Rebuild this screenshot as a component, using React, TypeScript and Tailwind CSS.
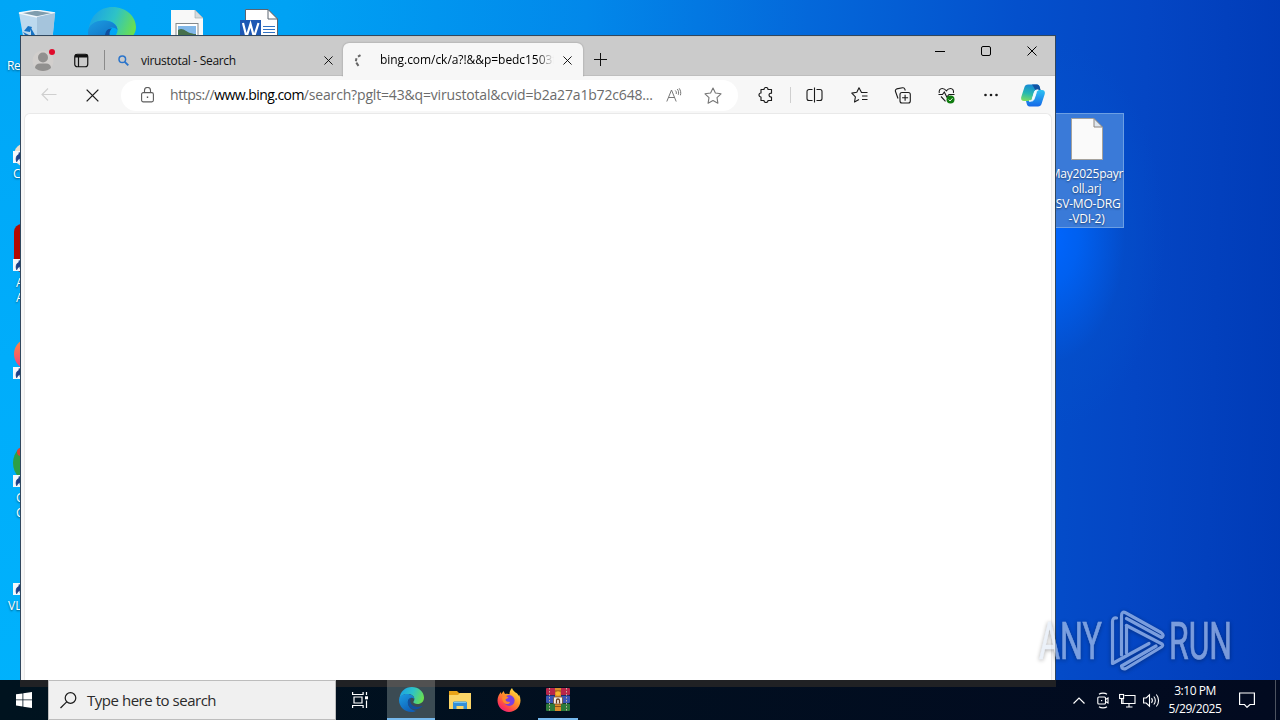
import React from 'react';

const UI_FONT = "font-['Open_Sans','Noto_Sans',sans-serif]";

const ShortcutArrow: React.FC = () => (
  <svg className="block" width="12" height="12" viewBox="0 0 12 12">
    <rect width="12" height="12" fill="#f4f7fb" />
    <path d="M3.500 10.500C2.500 7 3.500 4 6 3.500V1.500L11 6l-4 3.600V7.400C5.600 7.500 4.600 8.600 4 10.500z" fill="#1d3f86" stroke="#1d3f86" strokeWidth=".8" />
  </svg>
);

const EdgeIcon: React.FC<{ size: number; id: string }> = ({ size, id }) => (
  <svg className="block shrink-0" width={size} height={size} viewBox="0 0 48 48">
    <defs>
      <linearGradient id={`${id}-top`} x1="0" y1="0.3" x2="1" y2="0.6">
        <stop offset="0" stopColor="#1aa2e6" />
        <stop offset="0.5" stopColor="#2ec3c6" />
        <stop offset="1" stopColor="#6be04c" />
      </linearGradient>
      <linearGradient id={`${id}-body`} x1="0" y1="0" x2="0.6" y2="1">
        <stop offset="0" stopColor="#1b9de2" />
        <stop offset="1" stopColor="#0f5fb8" />
      </linearGradient>
    </defs>
    <path d="M1 22C2 9 12 0 24.500 0 38 0 48 9.500 48 20c0 8-5.500 12.500-12.500 12.500-5 0-8-2-8-3.600 0-1 2-2.200 2-5.900C29.500 17.500 24 13.500 16.500 13.500 8.500 13.500 3 17.500 1 22z" fill={`url(#${id}-top)`} />
    <path d="M0 25c0-7 7-11.500 15.500-11.500 8 0 14 4.200 14 9.500C27 20.500 24 20 22 21c-4 2-6 6-4.500 12 2 8 9 12.500 16 12.500-3 1.600-6 2.500-9.500 2.500C10.500 48 0 37.500 0 25z" fill={`url(#${id}-body)`} />
    <path d="M17 28c-1 9 7 15.500 15 15 5-.3 9-2.400 12.500-5.500.6-.5 0-1.200-.8-.8-2 1-4.500 1.600-7.700 1.600-9 0-14.500-6-14.500-11.300 0-2.500 1-4.500 2.500-5.800C20 21.500 17.500 23.500 17 28z" fill="#124f9e" />
  </svg>
);

const RecycleBin: React.FC = () => (
  <svg className="block" width="40" height="48" viewBox="0 0 40 48">
    <path d="M1 3l17-3 19 3-4 40H8z" fill="#bcd9ee" />
    <path d="M1 3l17-3 19 3-18 4z" fill="#7f9dae" stroke="#f1f7fb" strokeWidth="1.300" />
    <path d="M19 7l18-4-4 40-14-3z" fill="#a5c4dc" />
    <path d="M6 21l4-5 4 1-2 5zM13 18l4 7-4 2zM5 22l6 3v6z" fill="#1673c5" />
  </svg>
);

const PictureFile: React.FC = () => (
  <svg className="block" width="32" height="40" viewBox="0 0 32 40">
    <path d="M0 0h24l8 8v32H0z" fill="#f8f8f8" />
    <path d="M24 0v8h8z" fill="#d5dadd" stroke="#9aa" strokeWidth=".6" />
    <rect x="5" y="13.500" width="22" height="18" fill="#fff" stroke="#84898c" />
    <rect x="7" y="16" width="18" height="14" fill="#81b7e8" />
    <path d="M7 20c5-3 8 2 12 3s4 1 6 1v6H7z" fill="#46704c" />
  </svg>
);

const WordFile: React.FC = () => (
  <svg className="block" width="38" height="40" viewBox="0 0 38 40">
    <path d="M5.500 .5H28L37.500 10v30h-32z" fill="#fff" stroke="#5b6470" />
    <path d="M28 .5V10h9.500z" fill="#fff" stroke="#5b6470" />
    <path d="M23 17.500h12M23 20.500h12M23 23.500h12" stroke="#2f72c4" />
    <rect x="0" y="11" width="21" height="20" fill="#1d58b4" />
    <path d="M3 14l3.500 14L10.500 15l3.500 13 4.500-14" fill="none" stroke="#fff" strokeWidth="2.200" />
  </svg>
);

const BlankFile: React.FC = () => (
  <svg className="block" width="32" height="42" viewBox="0 0 32 42">
    <path d="M.5.500h22l9 9v32H.5z" fill="#fafafa" stroke="#a5a29c" />
    <path d="M23 .5v8.500h8.500z" fill="#dfe6ee" stroke="#8c8680" />
  </svg>
);

const Close: React.FC<{ size: number; className?: string }> = ({ size, className = '' }) => (
  <svg className={`block shrink-0 ${className}`} width={size} height={size} viewBox="0 0 10 10">
    <path d="M.5.500l9 9M9.500.500l-9 9" stroke="currentColor" strokeWidth="1" />
  </svg>
);

const TabStrip: React.FC = () => (
  <div className="flex h-10 shrink-0 bg-[#cbcbcb] border-b border-[#bebebe] border-t border-t-[#c6c6c2]">
    <div className="flex w-[322px] items-center pt-2">
      <svg className="ml-[11px] block shrink-0" width="24" height="24" viewBox="0 0 24 24">
        <circle cx="11" cy="13" r="10.500" fill="#d2cfcd" />
        <circle cx="11" cy="9.500" r="5" fill="#91908f" />
        <path d="M3 20c0-3 2-4.500 5-4.500h6c3 0 5 1.500 5 4.500-4 4-12 4-16 0z" fill="#91908f" />
        <circle cx="20" cy="4" r="3" fill="#e00b2b" />
      </svg>
      <svg className="ml-[18px] block shrink-0" width="15" height="15" viewBox="0 0 15 15" fill="none" stroke="#111">
        <rect x=".75" y="1.250" width="13" height="12.500" rx="2.500" strokeWidth="1.200" />
        <path d="M1 3h12.500" strokeWidth="3" />
        <path d="M4.500 4v10" strokeWidth="1.200" />
      </svg>
      <div className="ml-[15px] h-5 w-px shrink-0 bg-[#8a8a8a]" />
      <svg className="ml-[13px] block shrink-0" width="11" height="11" viewBox="0 0 11 11" fill="none" stroke="#2a74cb">
        <circle cx="4.300" cy="4.300" r="3.300" strokeWidth="1.500" />
        <path d="M6.800 6.800L10.300 10.300" strokeWidth="1.900" />
      </svg>
      <span className="ml-3 pt-px text-[12px] leading-4 text-[#111] tracking-[-0.3px] whitespace-nowrap">virustotal - Search</span>
      <Close size={9} className="ml-auto mr-[10px] text-black" />
    </div>
    <div className="mt-[6px] flex h-[34px] w-[240px] shrink-0 items-center rounded-t-md bg-[#f7f7f7] shadow-[0_0_2px_rgba(0,0,0,0.300)] [clip-path:inset(-3px_-3px_0_-3px)]">
      <svg className="ml-[11px] block shrink-0" width="8" height="13" viewBox="0 0 8 13" fill="none" stroke="#666" strokeWidth="2">
        <path d="M6.500 1.200L4 2.700M2.500 4.300L1.800 7.300M2.300 8.700L4.500 11.800" />
      </svg>
      <span className="ml-[18px] w-[174px] overflow-hidden whitespace-nowrap bg-linear-to-r from-black from-90% to-transparent bg-clip-text text-[12px] leading-4 tracking-[-0.05px] text-transparent">
        bing.com/ck/a?!&amp;&amp;p=bedc1503f
      </span>
      <Close size={9} className="ml-[9px] text-black" />
    </div>
    <svg className="ml-[10px] mt-[15px] block" width="15" height="15" viewBox="0 0 15 15">
      <path d="M7.500 1v13M1 7.500h13" stroke="#111" strokeWidth="1" />
    </svg>
    <div className="ml-auto flex h-[28px] text-black">
      <div className="flex w-[46px] items-center justify-center">
        <div className="h-px w-[10px] bg-black" />
      </div>
      <div className="flex w-[46px] items-center justify-center">
        <div className="h-[10px] w-[10px] rounded-[2px] border border-black" />
      </div>
      <div className="flex w-[46px] items-center justify-center">
        <Close size={10} />
      </div>
    </div>
  </div>
);

const Toolbar: React.FC = () => (
  <div className="flex h-[37px] shrink-0 items-center bg-[#f7f7f7] pt-px text-[#1b1b1b]">
    <svg className="ml-5 block shrink-0" width="16" height="14" viewBox="0 0 16 14" fill="none" stroke="#cfcfcf" strokeWidth="1.100">
      <path d="M15.500 6.500H1M7 .5l-6 6 6 6" />
    </svg>
    <Close size={13} className="ml-[29px]" />
    <div className="ml-[22px] flex h-[31px] w-[617px] shrink-0 items-center rounded-full bg-white">
      <svg className="ml-[20px] block shrink-0" width="13" height="16" viewBox="0 0 13 16" fill="none" stroke="#5d5d5d" strokeWidth="1.100">
        <rect x=".6" y="5.600" width="11.800" height="9.300" rx="1.600" />
        <path d="M3.500 5.500V3.500a3 3 0 016 0v2" />
        <rect x="5.800" y="9.500" width="1.400" height="1.400" fill="#444" stroke="none" />
      </svg>
      <span className="ml-[16px] w-[484px] shrink-0 whitespace-nowrap text-[14px] leading-5 tracking-[-0.17px] text-[#6b6b6b]">
        <span className="tracking-[-0.45px]">https://</span><span className="text-black tracking-[-0.55px]">www.bing.com</span>/search?pglt=43&amp;q=virustotal&amp;cvid=b2a27a1b72c648...
      </span>
      <svg className="ml-[12px] block shrink-0" width="16" height="15" viewBox="0 0 16 15" fill="none" stroke="#777" strokeWidth="1">
        <path d="M.8 13.500L5.500 2l4.700 11.500M2.500 9.500h6M9.300 2.500c1 .8 1.300 2 .9 3.500M11.300 1c1.300 1.800 1.600 3.500 1 5.800M13.200.300c1.500 2.200 1.900 4.500 1.200 7" />
      </svg>
      <svg className="ml-[22px] block shrink-0" width="18" height="17" viewBox="0 0 18 17" fill="none" stroke="#777" strokeWidth="1.100" strokeLinejoin="round">
        <path d="M9 1l2.400 5 5.600.8-4 3.900.9 5.500L9 13.600l-4.900 2.600.9-5.500-4-3.900L6.600 6z" />
      </svg>
    </div>
    <svg className="ml-[20px] block shrink-0" width="16" height="16" viewBox="0 0 16 16" fill="none" stroke="currentColor" strokeWidth="1.150">
      <path d="M3 2.500h3a2 2 0 014 0h3.500v3.700c-3.300-.4-3.300 4.200 0 3.800v3.500H10a2 2 0 01-4 0H3V10a2 2 0 010-4z" strokeLinejoin="round" />
    </svg>
    <div className="ml-[16px] h-4 w-px shrink-0 bg-[#cfcfcf]" />
    <svg className="ml-[15px] block shrink-0" width="17" height="16" viewBox="0 0 17 16" fill="none" stroke="currentColor" strokeWidth="1.100">
      <path d="M6.500 2.500H3a2 2 0 00-2 2v7a2 2 0 002 2h3.500M10.500 2.500H14a2 2 0 012 2v7a2 2 0 01-2 2h-3.500M8.500.500v15" />
    </svg>
    <svg className="ml-[28px] block shrink-0" width="17" height="16" viewBox="0 0 17 16" fill="none" stroke="currentColor" strokeWidth="1.100">
      <path d="M11.300 5.500h-.8L8 .8 5.800 5.300.8 6.100 4.400 9.800l-.9 5.200L8 12.600M10 5.500h6.500M11 9h5.500M11 12.500h5.500" strokeLinejoin="round" />
    </svg>
    <svg className="ml-[26px] block shrink-0" width="17" height="17" viewBox="0 0 17 17" fill="none" stroke="currentColor" strokeWidth="1.100">
      <rect x="6" y="5.500" width="10.300" height="10.500" rx="2" />
      <path d="M11.100 7.800v6M8.100 10.800h6M4 11.500L1.500 4.500a2 2 0 011.200-2.600L8.500.8a2 2 0 012.300 1.300l.5 1.400" />
    </svg>
    <svg className="ml-[27px] block shrink-0" width="17" height="17" viewBox="0 0 17 17" fill="none" stroke="currentColor" strokeWidth="1.100">
      <path d="M1.300 6C.7 3.500 2 1.500 4.200 1.500c2 0 3.200 1 4.100 2.300 1-1.300 2.200-2.300 4.200-2.300 2.200 0 3.500 2 2.900 4.500M3 9.500l4.500 4.800M.5 7.500h4L6.300 5l2.500 5L11 7.500h5.500" />
      <circle cx="12.500" cy="12.500" r="4" fill="#107c10" stroke="none" />
      <path d="M10.700 12.600l1.400 1.400 2.400-2.800" stroke="#fff" strokeWidth=".9" />
    </svg>
    <svg className="ml-[29px] block shrink-0" width="14" height="4" viewBox="0 0 14 4" fill="#1b1b1b">
      <circle cx="1.500" cy="2" r="1.300" />
      <circle cx="7" cy="2" r="1.300" />
      <circle cx="12.500" cy="2" r="1.300" />
    </svg>
    <svg className="ml-[23px] block shrink-0" width="24" height="23" viewBox="0 0 24 23">
      <defs>
        <linearGradient id="cp-left" x1="0.500" y1="0" x2="0.300" y2="1">
          <stop offset="0" stopColor="#1587d8" />
          <stop offset="0.550" stopColor="#26b8b0" />
          <stop offset="1" stopColor="#7bdc63" />
        </linearGradient>
        <linearGradient id="cp-right" x1="0.400" y1="0" x2="0.400" y2="1">
          <stop offset="0" stopColor="#2cc2f2" />
          <stop offset="1" stopColor="#1668e8" />
        </linearGradient>
      </defs>
      <path d="M7 .5h9c1.500 0 2.300 1 2.700 2.500L19.500 6h-3c-2 0-3 1-3.600 3l-2 6.500C10.300 17 9 17 7.500 17H3c-2.500 0-3.400-2-2.600-4.500L3.500 3C4 1.500 5 .5 7 .5z" fill="url(#cp-left)" />
      <path d="M11 .5h5c1.500 0 2.300 1 2.700 2.500L19.500 6h-3c-2 0-3-.5-3.500-2.500z" fill="#1253a4" />
      <path d="M17 22.500H8.500c-1.500 0-2.300-1-2.700-2.500L5 17h3c2 0 3-1 3.600-3l2-6.500C14.200 6 15.500 6 17 6h4c2.500 0 3.400 2 2.600 4.500L20.500 20c-.5 1.500-1.500 2.500-3.500 2.500z" fill="url(#cp-right)" />
      <path d="M13.600 7.500L11 16c-.5 1-1.500 1-3 1h2.500c1.500 0 2.300-1 2.800-2.500l2-6c.4-1.500 1-2.500 2-2.500-1.700 0-3 0-3.700 1.500z" fill="#f2fbff" stroke="#f2fbff" />
    </svg>
  </div>
);

const BrowserWindow: React.FC = () => (
  <div className="absolute left-5 top-[35px] flex h-[653px] w-[1036px] flex-col border border-[#31475e] bg-[#f7f7f7]">
    <TabStrip />
    <Toolbar />
    <div className="mx-[3px] flex-1 rounded-t-md border border-b-0 border-[#e9e9e9] bg-white" />
  </div>
);

// Icons whose right part is hidden behind the browser window
const DesktopIcons: React.FC = () => (
  <div className="text-[12px] leading-[15px] text-white [text-shadow:0_1px_2px_rgba(0,0,0,0.500)]">
    <div className="absolute left-[18px] top-[10px]"><RecycleBin /></div>
    <span className="absolute left-[7px] top-[58px] whitespace-nowrap tracking-[-0.3px]">Recycle Bin</span>
    <div className="absolute left-[88px] top-[7px]"><EdgeIcon size={48} id="desk-edge" /></div>
    <div className="absolute left-[171px] top-[10px]"><PictureFile /></div>
    <div className="absolute left-[240px] top-[9px]"><WordFile /></div>

    <div className="absolute left-[14px] top-[143px] h-6 w-8 rounded-full bg-[#eadfce]" />
    <div className="absolute left-[13px] top-[151px]"><ShortcutArrow /></div>
    <span className="absolute left-[13px] top-[166px]">C</span>

    <div className="absolute left-[14px] top-[224px] h-12 w-12 rounded-lg bg-[#b30b00]" />
    <div className="absolute left-[13px] top-[259px]"><ShortcutArrow /></div>
    <div className="absolute left-[16px] top-[275px]">A<br />A</div>

    <div className="absolute left-[14px] top-[338px] h-8 w-8 rounded-full bg-linear-to-b from-[#ff8a2b] to-[#f2317c]" />
    <div className="absolute left-[13px] top-[367px]"><ShortcutArrow /></div>

    <div className="absolute left-[13px] top-[443px] h-10 w-10 rounded-full bg-[#2d9f47]" />
    <div className="absolute left-[17px] top-[448px] h-2 w-4 rounded-full bg-[#dc4437]" />
    <div className="absolute left-[13px] top-[475px]"><ShortcutArrow /></div>
    <div className="absolute left-[16px] top-[490px]">G<br />C</div>

    <div className="absolute left-[13px] top-[583px]"><ShortcutArrow /></div>
    <span className="absolute left-[8px] top-[598px]">VLC</span>

    <div className="absolute left-[1049px] top-[113px] flex h-[115px] w-[75px] flex-col items-center border border-[#6c9fe3] bg-[#3a7ad8] pt-1">
      <BlankFile />
      <div className="mt-[6px] text-center whitespace-nowrap tracking-[-0.2px]">
        May2025payr<br />oll.arj<br />(SV-MO-DRG<br />-VDI-2)
      </div>
    </div>
  </div>
);

const Watermark: React.FC = () => (
  <svg className="absolute left-[1034px] top-[604px] overflow-visible opacity-55 drop-shadow-[0_1px_2px_rgba(0,0,0,0.600)]" width="204" height="74" viewBox="0 0 204 74">
    <g fill="#dce6f5" stroke="#dce6f5" strokeWidth=".7" fontFamily="Roboto, sans-serif" fontSize="52">
      <text x="5" y="55" textLength="63" lengthAdjust="spacingAndGlyphs">ANY</text>
      <text x="135" y="55" textLength="63" lengthAdjust="spacingAndGlyphs">RUN</text>
    </g>
    <g fill="none" stroke="#dce6f5" strokeWidth="3.200" strokeLinejoin="round" strokeLinecap="round">
      <path d="M82.500 14Q78.500 13.500 78.500 17.500V59.500L115 39.500" />
      <path d="M87.500 51V12Q87.500 6.500 92 9L127 28.500Q131 31.500 127.500 33.500L92.500 14.500M92.500 21.500L128 40Q129.500 41.500 127.500 43L92 64.500Q88 66 87.500 62L122 42" />
      <path d="M92.500 21.500V49" />
    </g>
  </svg>
);

const Taskbar: React.FC = () => (
  <div className="absolute bottom-0 left-0 flex h-10 w-full bg-linear-to-r from-[#00131f] to-[#020a20] text-white">
    <div className="absolute left-5 top-0 h-[7px] w-[1036px] bg-[#202124]" />
    <div className="relative flex w-12 shrink-0 items-center justify-center">
      <svg className="block" width="16" height="16" viewBox="0 0 16 16" fill="#fff">
        <path d="M0 2.300l6.500-.9v6.100H0zM7.300 1.300L16 0v7.500H7.300zM0 8.300h6.500v6.200L0 13.600zM7.300 8.300H16V16l-8.700-1.300z" />
      </svg>
    </div>
    <div className="relative flex w-72 shrink-0 items-center border border-[#bdbdbd] bg-[#f0f0f0]">
      <svg className="ml-[11px] block shrink-0" width="17" height="17" viewBox="0 0 17 17" fill="none" stroke="#1b1b1b" strokeWidth="1.200">
        <circle cx="10.500" cy="6" r="5.300" />
        <path d="M6.700 9.800L.5 16" />
      </svg>
      <span className="ml-[10px] text-[15px] leading-5 tracking-[-0.47px] text-[#2b2b2b]">Type here to search</span>
    </div>
    <div className="relative flex w-[51px] shrink-0 items-center pl-4">
      <svg className="block" width="17" height="16" viewBox="0 0 17 16" fill="none" stroke="#fff" strokeWidth="1.200">
        <path d="M.6 0v2.500h10.500V0M.6 16v-2.500h10.500V16M2 5h8v6H2zM14.500 0v3M14.500 8.500V16" />
        <rect x="13" y="4.300" width="3" height="3" fill="#fff" stroke="none" />
      </svg>
    </div>
    <div className="relative flex w-12 shrink-0 items-center justify-center border-b-2 border-[#76b9ed] bg-[#3b4b53]">
      <div className="absolute left-0 top-0 h-[7px] w-full bg-[#515151]" />
      <EdgeIcon size={25} id="bar-edge" />
    </div>
    <div className="relative flex w-[49px] shrink-0 items-center justify-center">
      <svg className="block" width="22" height="20" viewBox="0 0 22 20">
        <path d="M0 1h8l2 2h12v16H0z" fill="#e8a317" />
        <path d="M0 5h9l2-2h11v16H0z" fill="#fbd567" />
        <path d="M4 19v-6c0-1 .7-1.500 1.500-1.500h11c.8 0 1.500.5 1.500 1.500v6h-3.500v-3h-7v3z" fill="#338fd8" />
        <path d="M5 12.500h12" stroke="#74c4f5" />
      </svg>
    </div>
    <div className="relative flex w-[49px] shrink-0 items-center justify-center">
      <svg className="block" width="24" height="24" viewBox="0 0 24 24">
        <defs>
          <linearGradient id="fox" x1="0.900" y1="0" x2="0.200" y2="1">
            <stop offset="0" stopColor="#fff04a" />
            <stop offset="0.450" stopColor="#ff9427" />
            <stop offset="0.800" stopColor="#ff3d4f" />
            <stop offset="1" stopColor="#e51a86" />
          </linearGradient>
        </defs>
        <path d="M15 0c.5 2 2 3 3.500 4.500C20 5 21 6 21.500 8l.5-1.500c1 2 1.500 4 1.500 6C23.500 19 18.300 24 12 24S.5 19 .5 12.500C.5 9 2 6 4 4l.3 2.300L6.500 3 8 6c1.500-.5 3-.5 4.500.2C12.500 3.500 13.500 1.500 15 0z" fill="url(#fox)" />
        <circle cx="12.200" cy="12.500" r="5.400" fill="#7a3fe0" />
        <path d="M5.500 8.500c2.500-1.200 4.500-.5 6 1.200l-2.800 1.500c-.4 1.500.8 2.500 2.300 2.500 1.500 0 2 .3 2 .8-1.200 2.500-5.500 2-7-1-.8-1.500-1-3.500-.5-5z" fill="#ff8a2a" />
      </svg>
    </div>
    <div className="relative flex w-[49px] shrink-0 justify-center pt-2">
      <svg className="block" width="24" height="23" viewBox="0 0 24 23">
        <rect y="0" width="24" height="7" rx="1" fill="#b8264a" />
        <rect y="7.500" width="24" height="7.500" rx="1" fill="#3a55b5" />
        <rect y="15.500" width="24" height="7.500" rx="1" fill="#2c7a3b" />
        <path d="M3.500 0v23M20.500 0v23" stroke="#c8b4a0" strokeDasharray="1.500 1.500" />
        <rect x="9" y="0" width="6" height="23" fill="#d98c2b" />
        <path d="M9 3h6M9 18.500h6" stroke="#8d4f16" />
        <rect x="7.500" y="9" width="9" height="7" rx="1" fill="#f5efe6" stroke="#6d3c1b" strokeWidth=".7" />
        <path d="M10.500 15.500v-3a1.500 1.500 0 013 0v3" fill="none" stroke="#6d3c1b" strokeWidth="1.300" />
        <circle cx="12" cy="5.500" r="2.300" fill="#f8b52b" />
      </svg>
      <div className="absolute bottom-0 left-[5px] h-0.5 w-10 bg-[#76b9ed]" />
    </div>
    <div className="relative ml-auto flex items-center">
      <svg className="block" width="12" height="7" viewBox="0 0 12 7" fill="none" stroke="#fff" strokeWidth="1.200">
        <path d="M.5 6.500L6 1l5.500 5.500" />
      </svg>
      <svg className="ml-[12px] block" width="12" height="17" viewBox="0 0 12 17" fill="none" stroke="#fff" strokeWidth="1.100">
        <rect x=".8" y="5" width="7.700" height="7" rx="1" />
        <path d="M8.500 7.500L11 6v5L8.500 9.500M2 2.300C4 .700 8 .700 10 2.300M2 14.700c2 1.600 6 1.600 8 0" />
        <rect x="4" y="8" width="1.200" height="1.200" fill="#fff" stroke="none" />
      </svg>
      <svg className="ml-[10px] block" width="17" height="15" viewBox="0 0 17 15" fill="none" stroke="#fff" strokeWidth="1.100">
        <path d="M5.500 2.500h10.500v8H4V6M10 10.500V14M7 14h6.500" />
        <rect x=".6" y="1.500" width="4" height="4" />
        <path d="M2.600 5.500v5h2" />
      </svg>
      <svg className="ml-[7px] block" width="17" height="15" viewBox="0 0 17 15" fill="none" stroke="#fff" strokeWidth="1.100">
        <path d="M.6 5h2.600L6.500 1.800v11.400L3.200 10H.6zM8.500 5.200c1 1.300 1 3.300 0 4.600M10.800 3.500c2 2.200 2 5.800 0 8M13.300 1.500c3 3.400 3 8.600 0 12" />
      </svg>
      <div className="ml-[8px] w-[54px] text-center text-[12px] leading-[18px] tracking-[-0.45px] whitespace-nowrap">
        3:10 PM<br />5/29/2025
      </div>
      <svg className="ml-[17px] block" width="16" height="16" viewBox="0 0 16 16" fill="none" stroke="#fff" strokeWidth="1.200">
        <path d="M.6 1h14.800v11.500h-4.400L8 15.300 5.500 12.500H.6z" />
      </svg>
      <div className="ml-[20px] mr-[4px] h-10 w-px bg-[#4d5360]" />
    </div>
  </div>
);

const App: React.FC = () => (
  <div className={`relative h-[720px] w-[1280px] overflow-hidden select-none bg-[linear-gradient(92deg,#00a8f8_0%,#00a2f4_22%,#0288ea_45%,#0468da_62%,#0450cc_78%,#0446c4_88%,#003ab6_100%)] ${UI_FONT}`}>
    <div className="absolute inset-y-0 left-0 w-5 bg-linear-to-b from-[#00a6f6] via-[#00adfb] to-[#00b2fc]" />
    <div className="absolute left-[935px] top-[40px] h-[390px] w-[230px] bg-[radial-gradient(closest-side,#0066ff,#0060f0_25%,#0450cc80_65%,#0450cc00)]" />
    <DesktopIcons />
    <BrowserWindow />
    <Taskbar />
    <Watermark />
  </div>
);

export default App;
